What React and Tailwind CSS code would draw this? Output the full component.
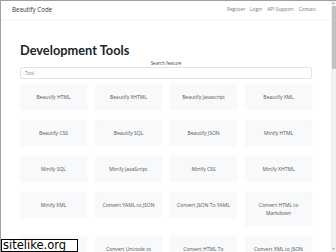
import React from 'react';

const tools = [
  'Beautify HTML', 'Beautify XHTML', 'Beautify Javascript', 'Beautify XML',
  'Beautify CSS', 'Beautify SQL', 'Beautify JSON', 'Minify HTML',
  'Minify SQL', 'Minify JavaScript', 'Minify CSS', 'Minify XHTML',
  'Minify XML', 'Convert YAML to JSON', 'Convert JSON To YAML', 'Convert HTML to Markdown',
  'Convert UTF8 to Unicode', 'Convert Unicode to UTF8', 'Convert HTML To Markdown', 'Convert XML to JSON',
];

const App = () => {
  return (
    <div className="relative flex h-[252px] w-[336px] overflow-hidden border-t border-l border-[#a0a0a0] bg-white font-['Open_Sans',sans-serif]">
      <div className="min-w-0 flex-1">
        {/* Navbar */}
        <nav className="flex h-[18px] items-center justify-between pl-[11px] pr-[15px] shadow-[0_1px_2px_rgba(0,0,0,0.06)]">
          <span className="text-[6.2px] text-[#333]">Beautify Code</span>
          <div className="flex gap-[5px] text-[4.8px] text-[#5f7d95]">
            <a>Register</a>
            <a>Login</a>
            <a>API Support</a>
            <a>Contact</a>
          </div>
        </nav>

        <main className="px-[19px] pt-[22px]">
          <h1 className="font-['Lato',sans-serif] text-[12.8px] leading-[18px] font-bold text-[#212529]">Development Tools</h1>
          <p className="mt-[1px] text-center text-[4.5px] leading-[6px] text-[#444]">Search feature</p>
          <input
            placeholder="Tool"
            className="mt-[1px] block h-[12px] w-full rounded-[2px] border border-[#e3e3e3] px-[4px] text-[4.5px] placeholder:text-[#777]"
          />

          {/* Tools grid */}
          <div className="mt-[5px] grid grid-cols-4 items-start gap-x-[8px] gap-y-[10px]">
            {tools.map(t => (
              <div
                key={t}
                className="rounded-[2px] bg-[#f8f9fa] px-[6px] py-[9px] text-center text-[5px] leading-[8px] text-[#555] shadow-[0_0_1px_rgba(0,0,0,0.08)]"
              >
                {t}
              </div>
            ))}
          </div>
        </main>
      </div>

      {/* Scrollbar */}
      <div className="flex w-[5px] flex-col items-center bg-[#f1f1f1]">
        <div className="h-[5px] text-[3px] leading-[5px] text-[#777]">▲</div>
        <div className="h-[63px] w-[4px] bg-[#c1c1c1]"></div>
        <div className="flex-1"></div>
        <div className="h-[5px] text-[3px] leading-[5px] text-[#777]">▼</div>
      </div>

      {/* watermark */}
      <div className="absolute bottom-0 left-0 h-[13px] w-[77px] border border-black bg-white pl-[1px] font-['DejaVu_Sans',sans-serif] text-[11.5px] leading-[11px] text-black">
        sitelike.org
      </div>
    </div>
  );
};

export default App;
